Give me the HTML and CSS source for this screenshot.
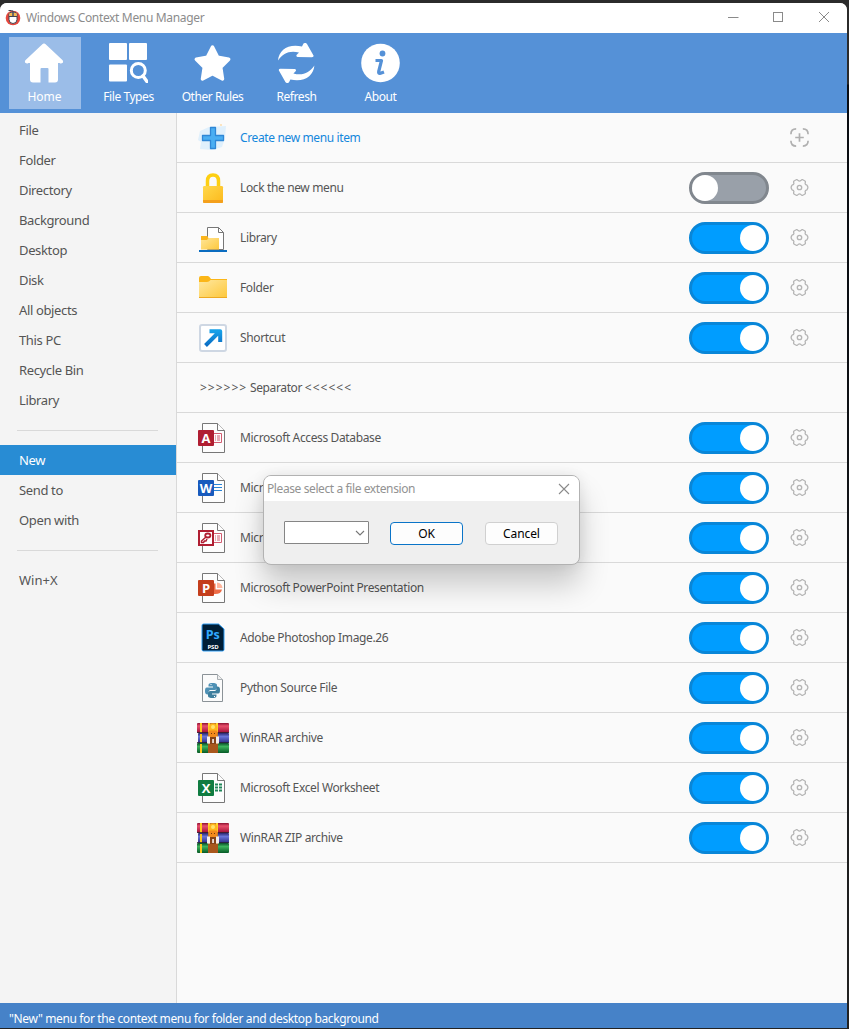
FILE: index.html
```html
<!DOCTYPE html>
<html lang="en">
<head>
<meta charset="utf-8">
<title>Windows Context Menu Manager</title>
<link rel="stylesheet" href="styles.css">
</head>
<body>
<svg class="defs" aria-hidden="true">
  <defs>
    <linearGradient id="gold" x1="0" y1="0" x2="1" y2="1"><stop offset="0" stop-color="#ffe8a0"/><stop offset="1" stop-color="#fdc83d"/></linearGradient>
    <linearGradient id="lockg" x1="0" y1="0" x2="1" y2="1"><stop offset="0" stop-color="#ffd84a"/><stop offset="1" stop-color="#fcb91c"/></linearGradient>
    <linearGradient id="tube-r" x1="0" y1="0" x2="0" y2="1"><stop offset="0" stop-color="#8c1030"/><stop offset=".3" stop-color="#e8506c"/><stop offset="1" stop-color="#a00c34"/></linearGradient>
    <linearGradient id="tube-b" x1="0" y1="0" x2="0" y2="1"><stop offset="0" stop-color="#27246c"/><stop offset=".35" stop-color="#6a74d8"/><stop offset="1" stop-color="#2c2c88"/></linearGradient>
    <linearGradient id="tube-g" x1="0" y1="0" x2="0" y2="1"><stop offset="0" stop-color="#084c28"/><stop offset=".35" stop-color="#3cb45c"/><stop offset="1" stop-color="#075a26"/></linearGradient>
    <linearGradient id="arrowg" x1="0" y1="0" x2="0" y2="1"><stop offset="0" stop-color="#16a0e8"/><stop offset="1" stop-color="#0a6cc4"/></linearGradient>
  </defs>
  <symbol id="gear" viewBox="0 0 22 22"><path d="M18.800 8.600Q20.800 11 18.800 13.400Q16.900 13.800 16.800 15.300Q17.800 17.400 16.400 18.100L14.400 19.200Q13.300 19.600 12.500 18.300Q11 17.200 9.500 18.300Q8.700 19.600 7.600 19.200L5.600 18.100Q4.200 17.400 5.200 15.300Q5.100 13.800 3.200 13.400Q1.200 11 3.200 8.600Q5.100 8.200 5.200 6.700Q4.200 4.600 5.600 3.900L7.600 2.800Q8.700 2.400 9.500 3.700Q11 4.800 12.500 3.700Q13.300 2.400 14.400 2.800L16.400 3.900Q17.800 4.600 16.800 6.700Q16.900 8.200 18.800 8.600Z" fill="none" stroke="#b5b5b5" stroke-width="1.300" stroke-linejoin="round"/><circle cx="11" cy="11" r="2.300" fill="none" stroke="#b5b5b5" stroke-width="1.400"/></symbol>
  <symbol id="page" viewBox="0 0 32 32"><path d="M5.500 1.500h15l7 7v22h-22z" fill="#fdfdfd" stroke="#777" stroke-width="1"/><path d="M20.500 1.500v7h7" fill="#fdfdfd" stroke="#777" stroke-width="1"/></symbol>
  <symbol id="rar" viewBox="0 0 32 32">
    <rect x="0" y="1" width="32" height="10" rx="1" fill="url(#tube-r)"/><rect x="1" y="11" width="31" height="10" rx="1" fill="url(#tube-b)"/><rect x="0" y="21" width="32" height="10" rx="1" fill="url(#tube-g)"/>
    <path d="M3 1h2v10H3zM3 12h2v9H3zM3 22h2v9H3z" fill="#ffc91c"/><path d="M0 10.500h32M0 20.500h32" stroke="#29202f" stroke-width=".8"/>
    <rect x="11" y="1" width="10" height="30" fill="#c47a2b"/><rect x="11" y="22" width="10" height="9" fill="#a9571d"/>
    <path d="M11 1h2v6h6V1h2v9H11z" fill="#ffd62c"/><circle cx="16" cy="6" r="4.500" fill="#ffb51c"/><circle cx="16" cy="5" r="2" fill="#ffe26a"/>
    <path d="M11.500 8.500h9L19.500 15h-7z" fill="#f28a1d"/><path d="M14 11h1v1h-1zM17 11h1v1h-1z" fill="#73360d"/>
    <path d="M10 14.500h3v2h6v-2h3v7H10z" fill="#f4eeee"/><rect x="13" y="15" width="6" height="7" fill="#854319"/><rect x="15.300" y="17" width="1.500" height="4" fill="#fff"/>
  </symbol>
</svg>

<div class="window">
  <header class="titlebar">
    <svg class="app-icon" viewBox="0 0 16 16"><circle cx="8" cy="8.500" r="7.300" fill="#e6473d"/><path d="M4 4.500Q4 2.500 8 2.500t4 2V10a4 4 0 0 1-8 0z" fill="#fff" stroke="#424552" stroke-width="1"/><path d="M4.500 3.500h3v3h-3zM8.500 3.500h3v3h-3z" fill="#f6b84b"/><path d="M8 7V2q0-1-1.500-1H3.500M4 7h8M8 2v5" fill="none" stroke="#424552"/></svg>
    <span class="title">Windows Context Menu Manager</span>
    <svg class="win-controls" viewBox="0 0 104 12"><path d="M0 6.500h10.500" stroke="#8a8a8a"/><rect x="45.500" y="1.500" width="9" height="9" fill="none" stroke="#8a8a8a"/><path d="M91 1l10 10M101 1L91 11" stroke="#8a8a8a"/></svg>
  </header>

  <nav class="toolbar">
    <div class="tool active"><svg viewBox="0 0 40 40"><path d="M20 2.500L37 18.500M20 2.500L3 18.500" stroke="#fff" stroke-width="4" stroke-linecap="round"/><path d="M20 1L39 20H34V36.500Q34 39.500 31 39.500H24.500V26Q24.500 25 23.500 25H17.500Q16.500 25 16.500 26V39.500H9Q6 39.500 6 36.500V20H1Z" fill="#fff"/></svg><span>Home</span></div>
    <div class="tool"><svg viewBox="0 0 40 40"><g fill="#fff"><rect x="1" y="0" width="18" height="17" rx="1"/><rect x="21" y="0" width="18" height="17" rx="1"/><rect x="1" y="21.500" width="18" height="17" rx="1"/></g><circle cx="30.300" cy="27.500" r="7" fill="none" stroke="#fff" stroke-width="3"/><path d="M35 33l4 5.500" stroke="#fff" stroke-width="3.500" stroke-linecap="round"/></svg><span>File Types</span></div>
    <div class="tool"><svg viewBox="0 0 40 40"><path d="M20.500 4l5.200 10.200 11 2-8 8.100L30.500 36l-10-5.200L10.500 36l1.800-11.700-8-8.100 11-2z" fill="#fff" stroke="#fff" stroke-width="3.500" stroke-linejoin="round"/></svg><span>Other Rules</span></div>
    <div class="tool"><svg viewBox="0 0 40 40"><path fill="#fff" d="M2 17.500C3 7 12 .5 26 3.500L27.500 0.500Q29.500 -.8 31 1L37.500 12.500Q38 14.200 36 14.200L21.500 14Q19.500 13 21 11.500L23 9.500C14 7 7 10 2 17.500Z"/><path transform="rotate(180 20.200 20)" fill="#fff" d="M2 17.500C3 7 12 .5 26 3.500L27.500 0.500Q29.500 -.8 31 1L37.500 12.500Q38 14.200 36 14.200L21.500 14Q19.500 13 21 11.500L23 9.500C14 7 7 10 2 17.500Z"/></svg><span>Refresh</span></div>
    <div class="tool"><svg viewBox="0 0 40 40"><circle cx="20.500" cy="20" r="19.300" fill="#fff"/><circle cx="22.500" cy="10.500" r="2.900" fill="#5591d7"/><path d="M15.500 17.500H21.500L18.700 28.500Q18.200 31 20.500 30.300L24 29" fill="none" stroke="#5591d7" stroke-width="3.200" stroke-linejoin="round"/></svg><span>About</span></div>
  </nav>

  <main class="body">
    <aside class="sidebar">
      <a class="item">File</a><a class="item">Folder</a><a class="item">Directory</a><a class="item">Background</a><a class="item">Desktop</a><a class="item">Disk</a><a class="item">All objects</a><a class="item">This PC</a><a class="item">Recycle Bin</a><a class="item">Library</a>
      <div class="split"></div>
      <a class="item selected">New</a><a class="item">Send to</a><a class="item">Open with</a>
      <div class="split"></div>
      <a class="item winx">Win+X</a>
    </aside>

    <section class="list">
      <div class="row create"><svg class="icon" viewBox="0 0 32 32"><path d="M3 9l9-4 17-1-1 12-3 9-10 3-12-1 1-7-3-2z" fill="#e0f0fc"/><path d="M13.500 5.500h5v8h8v5h-8v8h-5v-8h-8v-5h8z" fill="#4aaef2" stroke="#2f87d6" stroke-width="1.300" stroke-linejoin="round"/><circle cx="24" cy="3" r="1" fill="#fbdcae"/></svg><span class="name">Create new menu item</span><svg class="tail" viewBox="0 0 22 22"><path d="M2 7.500Q2 2 7.500 2M14.500 2Q20 2 20 7.500M20 14.500Q20 20 14.500 20M7.500 20Q2 20 2 14.500M11 6.500v9M6.500 11h9" fill="none" stroke="#b0b0b0" stroke-width="1.800"/></svg></div>
      <div class="row"><svg class="icon" viewBox="0 0 32 32"><path d="M10.500 16V9q0-6 5.500-6t5.500 6v7" fill="none" stroke="#fdcf12" stroke-width="3.500"/><rect x="6" y="14" width="20" height="17" rx="1.200" fill="url(#lockg)"/><path d="M6 28h20v1.800q0 1.200-1.200 1.200H7.200Q6 31 6 29.800z" fill="#f4a01c"/></svg><span class="name">Lock the new menu</span><i class="toggle off"></i><svg class="tail"><use href="#gear"/></svg></div>
      <div class="row"><svg class="icon" viewBox="0 0 32 32"><path d="M10.500 5.500h11l5 5v17h-16z" fill="#fff" stroke="#777"/><path d="M21.500 5.500v5h5" fill="none" stroke="#777"/><path d="M4 14h6l1 2h11v11.500H4z" fill="url(#gold)"/><path d="M4 14h6l1.500 2L10 18H4z" fill="#fcb61c"/><rect x="2" y="28" width="28" height="2" fill="#0a6cc0"/></svg><span class="name">Library</span><i class="toggle"></i><svg class="tail"><use href="#gear"/></svg></div>
      <div class="row"><svg class="icon" viewBox="0 0 32 32"><path d="M2 6q0-2 2-2h7q1 0 3 3h16v18.500H2z" fill="#fbb618"/><path d="M2 10h8q2 0 3.500-2H30v17H2z" fill="url(#gold)"/><path d="M2 25.500h28" stroke="#eda922"/></svg><span class="name">Folder</span><i class="toggle"></i><svg class="tail"><use href="#gear"/></svg></div>
      <div class="row"><svg class="icon" viewBox="0 0 32 32"><rect x="3" y="3" width="26" height="26" rx="2" fill="#fff" stroke="#ced7e3" stroke-width="2"/><path d="M8.500 23.500L22 10M12.500 9.300h10.700V20" fill="none" stroke="url(#arrowg)" stroke-width="4" stroke-linejoin="round"/></svg><span class="name">Shortcut</span><i class="toggle"></i><svg class="tail"><use href="#gear"/></svg></div>
      <div class="row separator"><span class="name"><span class="marks">&gt;&gt;&gt;&gt;&gt;&gt;</span> Separator <span class="marks">&lt;&lt;&lt;&lt;&lt;&lt;</span></span></div>
      <div class="row"><svg class="icon" viewBox="0 0 32 32"><use href="#page"/><path d="M17 11.500h7.500v9H17M18 14h1m1 0h3M18 16h1m1 0h3M18 18h1m1 0h3" fill="none" stroke="#d35d72"/><rect x="1" y="8" width="16" height="16" rx="1" fill="#b01e32"/><text class="letter" x="9" y="20.800">A</text></svg><span class="name">Microsoft Access Database</span><i class="toggle"></i><svg class="tail"><use href="#gear"/></svg></div>
      <div class="row"><svg class="icon" viewBox="0 0 32 32"><use href="#page"/><path d="M17 12.500h8M17 15.500h8M17 18.500h8" stroke="#2a85d8"/><rect x="1" y="8" width="16" height="16" rx="1" fill="#185abd"/><text class="letter" x="9" y="20.800">W</text></svg><span class="name">Microsoft Word Document</span><i class="toggle"></i><svg class="tail"><use href="#gear"/></svg></div>
      <div class="row"><svg class="icon" viewBox="0 0 32 32"><use href="#page"/><path d="M17 11.500h7.500v9H17M18 14h1m1 0h3M18 16h1m1 0h3M18 18h1m1 0h3" fill="none" stroke="#d35d72"/><rect x="2" y="9" width="14" height="14" fill="#fff" stroke="#b01e32" stroke-width="2"/><ellipse cx="10.800" cy="13.500" rx="2.600" ry="2" fill="none" stroke="#b01e32" stroke-width="1.800"/><path d="M9 15L4.500 19v1.500h2l1-1.500H9l1-2" fill="none" stroke="#b01e32" stroke-width="1.500"/></svg><span class="name">Microsoft Access Database</span><i class="toggle"></i><svg class="tail"><use href="#gear"/></svg></div>
      <div class="row"><svg class="icon" viewBox="0 0 32 32"><use href="#page"/><path d="M17 11.500h1.500v6H25Q24 22.500 17 22z" fill="#ed6c47"/><path d="M20 10.500q5 .5 5.500 5.500H20z" fill="#ffb69c"/><rect x="1" y="8" width="16" height="16" rx="1" fill="#c43e1c"/><text class="letter" x="9" y="20.800">P</text></svg><span class="name">Microsoft PowerPoint Presentation</span><i class="toggle"></i><svg class="tail"><use href="#gear"/></svg></div>
      <div class="row"><svg class="icon" viewBox="0 0 32 32"><path d="M6.500 2h15L27 7v20.500q0 1.500-1.500 1.500h-19Q5 29 5 27.500v-24Q5 2 6.500 2z" fill="#001e36" stroke="#2e9df5" stroke-width="1"/><text class="ps" x="15.800" y="17">Ps</text><text class="psd" x="16" y="27">PSD</text></svg><span class="name">Adobe Photoshop Image.26</span><i class="toggle"></i><svg class="tail"><use href="#gear"/></svg></div>
      <div class="row"><svg class="icon" viewBox="0 0 32 32"><path d="M5.500 2.500h15l5 5v22h-20z" fill="#fbfbfb" stroke="#8b9297"/><path d="M20.500 2.500v5h5" fill="#eee" stroke="#a9afb3"/><path d="M15.500 11c-4 0-4 1-4 3.500h4.500v1h-6c-2 0-2 2-2 4s1 3 2.500 3h1v-2c0-2 1-2.500 3-2.500h3c2 0 2.500-1 2.500-2.500V13c0-1.500-2-2-4.500-2z" fill="#4f91b5"/><path d="M15.500 26c4 0 4-1 4-3.500H15v-1h6c2 0 2-2 2-4s-1-3-2.500-3h-1v2c0 2-1 2.500-3 2.500h-3c-2 0-2.500 1-2.500 2.500V24c0 1.500 2 2 4.500 2z" fill="#3e7f9e"/><path d="M13.500 12.500h1M17 24.500h1" stroke="#fff"/></svg><span class="name">Python Source File</span><i class="toggle"></i><svg class="tail"><use href="#gear"/></svg></div>
      <div class="row"><svg class="icon"><use href="#rar"/></svg><span class="name">WinRAR archive</span><i class="toggle"></i><svg class="tail"><use href="#gear"/></svg></div>
      <div class="row"><svg class="icon" viewBox="0 0 32 32"><use href="#page"/><path d="M18 12.500h3M22 12.500h3M18 15.500h3M22 15.500h3M18 18.500h3M22 18.500h3" stroke="#21875a" stroke-width="2"/><rect x="1" y="8" width="16" height="16" rx="1" fill="#107c41"/><text class="letter" x="9" y="20.800">X</text></svg><span class="name">Microsoft Excel Worksheet</span><i class="toggle"></i><svg class="tail"><use href="#gear"/></svg></div>
      <div class="row"><svg class="icon"><use href="#rar"/></svg><span class="name">WinRAR ZIP archive</span><i class="toggle"></i><svg class="tail"><use href="#gear"/></svg></div>
    </section>
  </main>
  <footer class="status">"New" menu for the context menu for folder and desktop background</footer>
</div>

<div class="dialog">
  <div class="dialog-title"><span>Please select a file extension</span><svg viewBox="0 0 12 12"><path d="M1 1l10 10M11 1L1 11" stroke="#8a8a8a" stroke-width="1.100"/></svg></div>
  <div class="dialog-body">
    <div class="combo"><svg viewBox="0 0 10 6"><path d="M1 1l4 4 4-4" fill="none" stroke="#777" stroke-width="1.100"/></svg></div>
    <div class="button primary">OK</div>
    <div class="button">Cancel</div>
  </div>
</div>
</body>
</html>
```
FILE: styles.css
```css
* { box-sizing: border-box; }
body {
  margin: 0;
  width: 849px;
  height: 1029px;
  padding: 3px 2px 1px 0;
  overflow: hidden;
  background: linear-gradient(#2b2b2b 0, #2b2b2b 84px, #0a0d12 85px, #0a0d12 300px, #222 1000px);
  font-family: "Noto Sans", "Open Sans", sans-serif;
  font-size: 12px;
  letter-spacing: -.37px;
  color: #555;
}
.defs { position: absolute; width: 0; height: 0; }
.window {
  display: flex;
  flex-direction: column;
  height: 1025px;
  border-radius: 7px 7px 0 0;
  overflow: hidden;
  background: #fafafa;
}
.titlebar { display: flex; align-items: center; height: 30px; padding: 0 18px 2px 5px; background: #fff; }
.app-icon { width: 16px; height: 17px; margin-right: 5px; }
.title { color: #8c8c8c; letter-spacing: -.34px; flex: 1; }
.win-controls { width: 104px; height: 12px; margin-right: -3px; }

.toolbar { display: flex; gap: 12px; height: 80px; padding: 4px 9px; background: #5591d7; }
.tool { display: flex; flex-direction: column; align-items: center; width: 72px; height: 72px; padding: 6px 1px 0 0; color: #fff; white-space: nowrap; letter-spacing: -.43px; }
.tool.active { background: #9bbde8; letter-spacing: 0; }
.tool svg { width: 40px; height: 40px; margin-left: -1px; }
.tool span { margin-top: 5px; line-height: 18px; }

.body { display: flex; flex: 1; min-height: 0; }
.sidebar { display: flex; flex-direction: column; width: 177px; padding-top: 2px; border-right: 1px solid #d9d9d9; background: #f4f4f4; font-size: 13px; letter-spacing: -.36px; }
.item { height: 30px; line-height: 30px; padding-left: 19px; }
.item.selected { color: #fff; background: #288cd4; }
.item.winx { letter-spacing: 0; }
.split { height: 1px; margin: 15px 18px 14px 17px; background: #d9d9d9; }

.list { flex: 1; }
.row { display: flex; align-items: center; height: 50px; padding: 0 37px 0 20px; border-bottom: 1px solid #d9d9d9; }
.icon { width: 32px; height: 32px; margin-right: 11px; }
.name { flex: 1; white-space: nowrap; }
.create .name { color: #1487dc; }
.separator { padding-left: 23px; }
.marks { letter-spacing: 1px; }
.toggle { display: flex; justify-content: flex-end; width: 80px; height: 32px; margin-right: 19px; border: 3px solid #0886d8; border-radius: 16px; background: #009dff; }
.toggle::after { content: ""; width: 26px; height: 26px; border-radius: 50%; background: #fff; }
.toggle.off { justify-content: flex-start; border-color: #81878e; background: #99a0a9; }
.tail { width: 22px; height: 22px; padding: 0 0 1px 1px; }
.letter { font: bold 13px "Open Sans", sans-serif; letter-spacing: 0; fill: #fff; text-anchor: middle; }
.ps { font: bold 12.500px "Open Sans", sans-serif; letter-spacing: 0; fill: #31a8ff; text-anchor: middle; }
.psd { font: bold 6px "Open Sans", sans-serif; letter-spacing: -.1px; fill: #fff; text-anchor: middle; }

.status { height: 25px; padding-left: 9px; line-height: 31px; color: #fff; background: #4682c8; overflow: hidden; }

.dialog {
  position: absolute;
  left: 263px;
  top: 475px;
  width: 317px;
  height: 90px;
  border: 1px solid #b2b2b2;
  border-radius: 8px;
  overflow: hidden;
  background: #efefef;
  box-shadow: 0 20px 30px rgba(0,0,0,.2), 0 0 14px rgba(0,0,0,.08);
}
.dialog-title { display: flex; align-items: center; justify-content: space-between; height: 25px; padding: 0 9px 0 3px; background: #fff; color: #929292; letter-spacing: -.4px; }
.dialog-title svg { width: 12px; height: 12px; }
.dialog-body { display: flex; align-items: flex-start; padding: 20px 21px 0 20px; letter-spacing: -.1px; }
.combo { display: flex; align-items: center; justify-content: flex-end; width: 85px; height: 23px; padding-right: 3px; border: 1px solid #858585; border-radius: 1px; background: #fff; }
.combo svg { width: 10px; height: 6px; }
.button { width: 73px; height: 23px; margin: 1px 0 0 22px; border: 1px solid #d0d0d0; border-radius: 4px; background: #fdfdfd; color: #000; line-height: 21px; text-align: center; }
.button.primary { margin-left: 21px; border-color: #0a74c8; }
```
